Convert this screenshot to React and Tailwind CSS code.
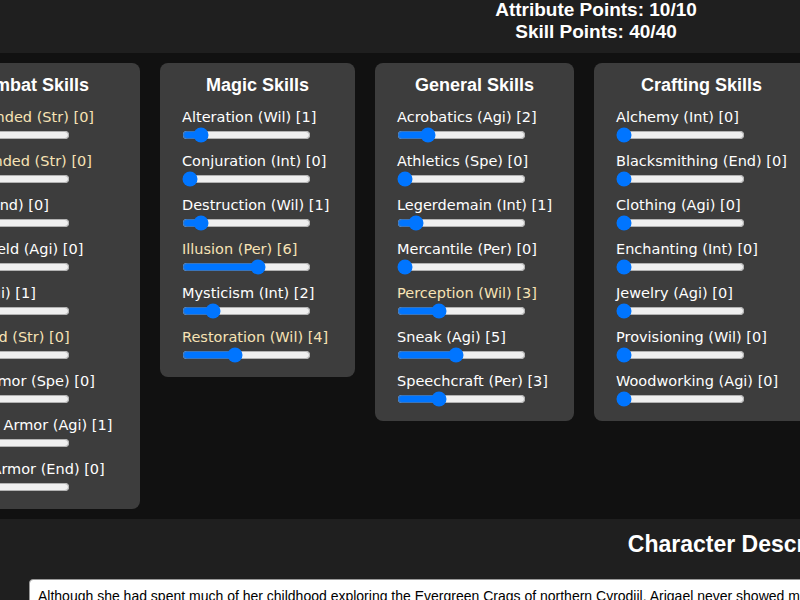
import React from "react";

const CREAM = "text-[#f7e3b5]";

const panels = [
  {
    title: "Combat Skills",
    w: "w-[221px]",
    items: [
      ["One-Handed (Str)", 0, true],
      ["Two-Handed (Str)", 0, true],
      ["Block (End)", 0, false],
      ["Dual Wield (Agi)", 0, false],
      ["Bow (Agi)", 1, false],
      ["Unarmed (Str)", 0, true],
      ["Light Armor (Spe)", 0, false],
      ["Medium Armor (Agi)", 1, false],
      ["Heavy Armor (End)", 0, false],
    ],
  },
  {
    title: "Magic Skills",
    w: "w-[195px]",
    items: [
      ["Alteration (Wil)", 1, false],
      ["Conjuration (Int)", 0, false],
      ["Destruction (Wil)", 1, false],
      ["Illusion (Per)", 6, true],
      ["Mysticism (Int)", 2, false],
      ["Restoration (Wil)", 4, true],
    ],
  },
  {
    title: "General Skills",
    w: "w-[199px]",
    items: [
      ["Acrobatics (Agi)", 2, false],
      ["Athletics (Spe)", 0, false],
      ["Legerdemain (Int)", 1, false],
      ["Mercantile (Per)", 0, false],
      ["Perception (Wil)", 3, true],
      ["Sneak (Agi)", 5, false, 4.5],
      ["Speechcraft (Per)", 3, false],
    ],
  },
  {
    title: "Crafting Skills",
    w: "w-[215px]",
    items: [
      ["Alchemy (Int)", 0, false],
      ["Blacksmithing (End)", 0, false],
      ["Clothing (Agi)", 0, false],
      ["Enchanting (Int)", 0, false],
      ["Jewelry (Agi)", 0, false],
      ["Provisioning (Wil)", 0, false],
      ["Woodworking (Agi)", 0, false],
    ],
  },
];

function Panel({ title, w, items }) {
  return (
    <div className={`${w} shrink-0 bg-[#3d3d3d] rounded-[8px] px-[22px] pt-[11px] pb-[14px]`}>
      <h3 className="text-center text-white font-bold text-[18px] leading-[22px] mb-[13px] whitespace-nowrap" style={{ fontFamily: '"Liberation Sans", Arial, sans-serif' }}>
        {title}
      </h3>
      <div className="flex flex-col gap-[10px]">
        {items.map(([label, val, major, pos]) => (
          <div key={label} className="flex flex-col">
            <label
              className={`text-[14.5px] leading-[17px] whitespace-nowrap ${major ? CREAM : "text-white"}`}
              style={{ fontFamily: '"DejaVu Sans", Verdana, sans-serif' }}
            >
              {label} [{val}]
            </label>
            <input
              type="range"
              min={0}
              max={10}
              step="any"
              defaultValue={pos ?? val}
              className="block w-[129px] h-[16px] mt-[1px]"
            />
          </div>
        ))}
      </div>
    </div>
  );
}

export default function App() {
  return (
    <div className="w-[800px] h-[600px] overflow-hidden bg-[#111111]" style={{ fontFamily: '"Liberation Sans", Arial, sans-serif' }}>
      <header className="h-[53px] bg-[#1f1f1f] overflow-hidden">
        <div className="w-[1192px] text-center text-white font-bold text-[19px] leading-[22px] -mt-[1px]">
          <div>Attribute Points: 10/10</div>
          <div>Skill Points: 40/40</div>
        </div>
      </header>
      <main className="py-[10px]">
        <div className="flex items-start gap-[20px] -ml-[81px]">
          {panels.map((p) => (
            <Panel key={p.title} {...p} />
          ))}
        </div>
      </main>
      <section className="bg-[#1f1f1f] pt-[11px] h-[200px]">
        <div className="w-[1496px] text-center">
          <h2 className="text-white font-bold text-[23px] leading-[28px] mb-[21px]">Character Description</h2>
        </div>
        <div className="ml-[29px] w-[1440px] bg-white border border-[#999] rounded-[4px] px-[8px] pt-[8px] text-black text-[14px] leading-[17px] whitespace-nowrap">
          Although she had spent much of her childhood exploring the Evergreen Crags of northern Cyrodiil, Arigael never showed much interest in the ways of the wild.
        </div>
      </section>
    </div>
  );
}
